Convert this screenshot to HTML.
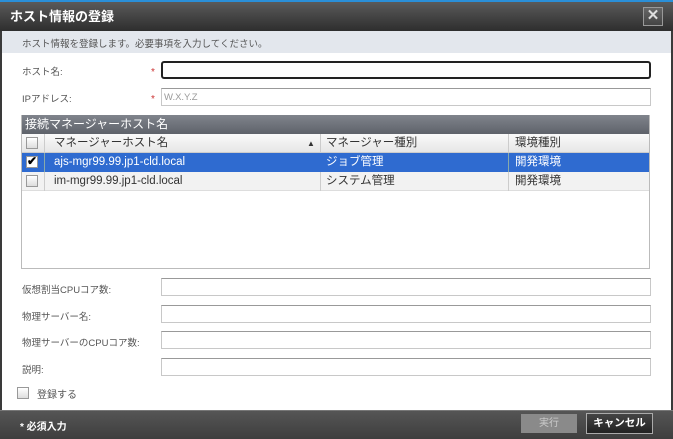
<!DOCTYPE html><html><head><meta charset="utf-8"><style>
*{box-sizing:border-box;margin:0;padding:0}
body{width:673px;height:439px;position:relative;background:#fff;font-family:"Liberation Sans","Noto Sans CJK JP",sans-serif;overflow:hidden;font-size:10px;color:#444}
.a{position:absolute}
.inp{position:absolute;left:161px;width:490px;height:18px;border:1px solid #c8c8c8;border-top-color:#999;background:#fff}
.lbl{position:absolute;left:22px;font-size:9.5px;color:#555}
.cb{position:absolute;width:12px;height:12px;border:1px solid #999;background:linear-gradient(#fff,#ddd)}
.row{position:absolute;left:22px;width:627px;height:19px;font-size:11.5px;line-height:19px}
.row span{position:absolute;top:0}
</style></head><body>
<div class="a" style="left:0;top:0;width:673px;height:439px;border:2px solid #3a3a3a;border-top:none"></div>
<div class="a" style="left:0;top:0;width:673px;height:31px;background:linear-gradient(#5a5a5a,#2e2e2e);border-top:2px solid #2a8fd8"></div>
<div class="a" style="left:10px;top:6px;color:#fff;font-weight:bold;font-size:13px">ホスト情報の登録</div>
<div class="a" style="left:643px;top:7px;width:20px;height:19px;border:1px solid #999;background:linear-gradient(#666,#444);color:#ddd;font-size:15px;line-height:16px;text-align:center;font-weight:bold">✕</div>
<div class="a" style="left:2px;top:31px;width:669px;height:22px;background:#e3e7ed"></div>
<div class="a" style="left:22px;top:36px;font-size:9.5px;color:#555">ホスト情報を登録します。必要事項を入力してください。</div>
<div class="lbl" style="top:64px">ホスト名:</div><div class="a" style="left:151px;top:67px;color:#c33">*</div>
<div class="inp" style="top:61px;border:2px solid #222;border-radius:3px"></div>
<div class="lbl" style="top:91px">IPアドレス:</div><div class="a" style="left:151px;top:94px;color:#c33">*</div>
<div class="inp" style="top:88px;color:#999;font-size:9.5px;padding:3px 2px">W.X.Y.Z</div>
<div class="a" style="left:21px;top:115px;width:629px;height:154px;border:1px solid #bbb"></div>
<div class="a" style="left:22px;top:115px;width:627px;height:19px;background:linear-gradient(#80848c,#5e626a);color:#fff;font-size:12px;line-height:19px;padding-left:3px">接続マネージャーホスト名</div>
<div class="row" style="top:134px;background:linear-gradient(#fafafa,#e6e6e6);color:#333;border-bottom:1px solid #ccc">
<div class="cb" style="left:4px;top:3px"></div><span style="left:32px">マネージャーホスト名</span><span style="left:285px;font-size:8px">▲</span><span style="left:304px">マネージャー種別</span><span style="left:493px">環境種別</span>
<div class="a" style="left:298px;top:0;width:1px;height:19px;background:#ccc"></div><div class="a" style="left:486px;top:0;width:1px;height:19px;background:#ccc"></div><div class="a" style="left:22px;top:0;width:1px;height:19px;background:#ccc"></div></div>
<div class="row" style="top:153px;background:#2f6bd0;color:#fff">
<div class="cb" style="left:4px;top:3px;background:#fff;color:#000;font-size:12px;line-height:9px;font-weight:bold">✔</div><span style="left:32px">ajs-mgr99.99.jp1-cld.local</span><span style="left:304px">ジョブ管理</span><span style="left:493px">開発環境</span>
<div class="a" style="left:486px;top:0;width:1px;height:19px;background:#8aa"></div><div class="a" style="left:22px;top:0;width:1px;height:19px;background:#8aa"></div></div>
<div class="row" style="top:172px;background:#f2f2f2;color:#333;border-bottom:1px solid #ddd">
<div class="cb" style="left:4px;top:3px"></div><span style="left:32px">im-mgr99.99.jp1-cld.local</span><span style="left:304px">システム管理</span><span style="left:493px">開発環境</span>
<div class="a" style="left:298px;top:0;width:1px;height:19px;background:#ccc"></div><div class="a" style="left:486px;top:0;width:1px;height:19px;background:#ccc"></div><div class="a" style="left:22px;top:0;width:1px;height:19px;background:#ccc"></div></div>
<div class="lbl" style="top:282px">仮想割当CPUコア数:</div><div class="inp" style="top:278px"></div>
<div class="lbl" style="top:309px">物理サーバー名:</div><div class="inp" style="top:305px"></div>
<div class="lbl" style="top:335px">物理サーバーのCPUコア数:</div><div class="inp" style="top:331px"></div>
<div class="lbl" style="top:362px">説明:</div><div class="inp" style="top:358px"></div>
<div class="cb" style="left:17px;top:387px"></div><div class="a" style="left:37px;top:386px;font-size:10px;color:#555">登録する</div>
<div class="a" style="left:0;top:410px;width:673px;height:29px;background:linear-gradient(#555,#3e3e3e);border-top:1px solid #777"></div>
<div class="a" style="left:20px;top:418px;color:#fff;font-weight:bold;font-size:10px">* 必須入力</div>
<div class="a" style="left:521px;top:414px;width:56px;height:19px;background:#8a8a8a;color:#ccc;text-align:center;line-height:19px;font-size:10px">実行</div>
<div class="a" style="left:586px;top:413px;width:67px;height:21px;background:linear-gradient(#444,#222);border:1px solid #aaa;color:#fff;text-align:center;line-height:19px;font-size:10.5px;font-weight:bold">キャンセル</div>
</body></html>
